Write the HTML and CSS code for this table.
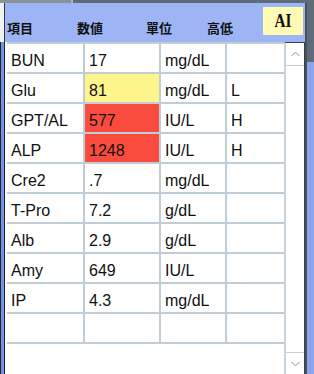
FILE: index.html
```html
<!DOCTYPE html>
<html>
<head>
<meta charset="utf-8">
<link rel="stylesheet" href="styles.css">
</head>
<body>
<div class="win">
  <div class="topbar"><span class="tb-light"></span></div>
  <div class="frame">
    <div class="lframe"><div class="lf-top"></div><div class="lf-bot"></div></div>
    <div class="panel">
      <div class="head">
        <span class="h h1">項目</span><span class="h h2">数値</span><span class="h h3">單位</span><span class="h h4">高低</span>
        <span class="ai"><span class="ai-t">AI</span></span>
      </div>
      <div class="body">
        <div class="grid">
          <div class="c">BUN</div><div class="c">17</div><div class="c">mg/dL</div><div class="c"></div>
          <div class="c">Glu</div><div class="c y">81</div><div class="c">mg/dL</div><div class="c">L</div>
          <div class="c">GPT/AL</div><div class="c r">577</div><div class="c">IU/L</div><div class="c">H</div>
          <div class="c">ALP</div><div class="c r">1248</div><div class="c">IU/L</div><div class="c">H</div>
          <div class="c">Cre2</div><div class="c">.7</div><div class="c">mg/dL</div><div class="c"></div>
          <div class="c">T-Pro</div><div class="c">7.2</div><div class="c">g/dL</div><div class="c"></div>
          <div class="c">Alb</div><div class="c">2.9</div><div class="c">g/dL</div><div class="c"></div>
          <div class="c">Amy</div><div class="c">649</div><div class="c">IU/L</div><div class="c"></div>
          <div class="c">IP</div><div class="c">4.3</div><div class="c">mg/dL</div><div class="c"></div>
          <div class="c"></div><div class="c"></div><div class="c"></div><div class="c"></div>
        </div>
        <div class="scroll">
          <div class="sbtn up"><svg width="9" height="6" viewBox="0 0 9 6"><path d="M0.5 5 L4.5 1 L8.5 5" fill="none" stroke="#8c98a4" stroke-width="1"/></svg></div>
          <div class="track"></div>
          <div class="sbtn down"><svg width="9" height="6" viewBox="0 0 9 6"><path d="M0.5 1 L4.5 5 L8.5 1" fill="none" stroke="#8c98a4" stroke-width="1"/></svg></div>
        </div>
      </div>
    </div>
    <div class="rframe"></div>
  </div>
</div>
</body>
</html>
```
FILE: styles.css
```css
html, body {
  margin: 0;
  padding: 0;
}
body {
  width: 314px;
  height: 374px;
  overflow: hidden;
  background: #5e6b78;
  font-family: "Liberation Sans", Arial, sans-serif;
}
.win {
  display: flex;
  flex-direction: column;
  height: 374px;
}
.topbar {
  height: 3px;
  background: #5e6b78;
  display: flex;
}
.tb-light {
  width: 71px;
  background: #8b939a;
  border-right: 2px solid #b0b6bb;
}
.frame {
  flex: 1;
  display: flex;
  min-height: 0;
}
.lframe {
  width: 5px;
  display: flex;
  flex-direction: column;
}
.lf-top {
  height: 39px;
  background: #f2f2f2;
  border-right: 1px solid #2e3640;
}
.lf-bot {
  flex: 1;
  background: #7592e4;
  border-left: 1px solid #1c2430;
  border-right: 1px solid #1c2430;
}
.panel {
  width: 300px;
  display: flex;
  flex-direction: column;
}
.head {
  height: 39px;
  background: #9db5f5;
  display: flex;
  align-items: flex-start;
  padding-left: 2px;
  box-sizing: border-box;
}
.h {
  font-family: "Noto Sans CJK JP", "Noto Sans CJK TC", sans-serif;
  font-weight: 700;
  font-size: 13px;
  line-height: 16px;
  margin-top: 17px;
  color: #111;
  white-space: nowrap;
}
.h1 { width: 70px; }
.h2 { width: 69px; }
.h3 { width: 61px; }
.h4 { width: 56px; }
.ai {
  margin-top: 4px;
  width: 40px;
  height: 28px;
  background: #fffab4;
  display: flex;
  align-items: center;
  justify-content: center;
}
.ai-t {
  display: inline-block;
  font-family: "Liberation Serif", "Times New Roman", serif;
  font-weight: 700;
  font-size: 18px;
  line-height: 18px;
  color: #111;
  transform: scaleX(0.85);
}
.body {
  flex: 1;
  display: flex;
  align-items: stretch;
  background: #fff;
  padding-left: 2px;
  min-height: 0;
}
.grid {
  width: 277px;
  display: grid;
  grid-template-columns: 76px 74px 64px 57px;
  grid-template-rows: repeat(10, 28px);
  gap: 2px;
  background: #c0ccd6;
  padding: 2px 0;
  align-self: flex-start;
}
.c {
  background: #fff;
  padding: 8px 0 0 4px;
  font-size: 16px;
  line-height: 18px;
  color: #111;
  white-space: nowrap;
  overflow: hidden;
}
.c.y { background: #fdf58c; }
.c.r { background: #f94b3e; }
.scroll {
  width: 21px;
  box-sizing: border-box;
  border-left: 2px solid #c8d2da;
  border-right: 1px solid #3a4048;
  border-top: 1px solid #3a4048;
  display: flex;
  flex-direction: column;
}
.sbtn {
  height: 22px;
  display: flex;
  align-items: center;
  justify-content: center;
}
.sbtn.up { border-bottom: 1px solid #c8d2da; }
.sbtn.down { border-top: 1px solid #c8d2da; height: 21px; }
.track { flex: 1; }
.rframe {
  width: 9px;
  box-sizing: border-box;
  border-left: 2px solid #48525c;
  background: linear-gradient(#5e6b78 0 59px, #8ba5ee 59px);
}
```
